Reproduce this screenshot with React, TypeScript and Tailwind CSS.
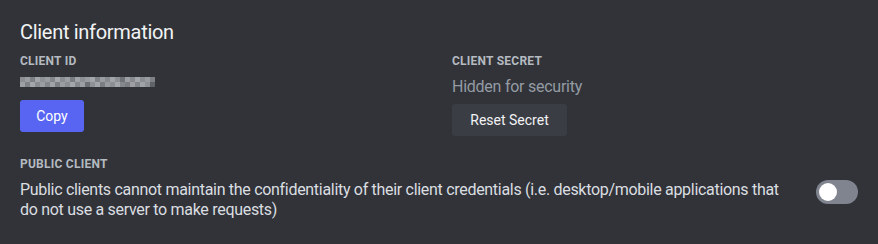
import React from "react";

// pixelated placeholder for the hidden client id
const idShades = [
  ["#8b8e93", "#9a9da2", "#7d8085", "#a2a5aa", "#8f9297", "#9a9da2", "#83868b", "#a5a8ad", "#8a8d92", "#9c9fa4", "#7a7d82", "#a0a3a8", "#8d9095", "#989ba0", "#a3a6ab", "#7f8287", "#9a9da2", "#878a8f", "#a1a4a9", "#8c8f94", "#6f7277", "#9d9fa4", "#878a8f", "#a4a7ac", "#8a8d92", "#989ba0", "#7e8186"],
  ["#9da0a5", "#7f8287", "#a3a6ab", "#888b90", "#9b9ea3", "#83868b", "#a0a3a8", "#7c7f84", "#9a9da2", "#8b8e93", "#a4a7ac", "#85888d", "#9c9fa4", "#6d7075", "#8e9196", "#a2a5aa", "#7b7e83", "#989ba0", "#8c8f94", "#a3a6ab", "#85888d", "#7a7d82", "#9e9fa5", "#83868b", "#a0a3a8", "#8e9196", "#5f6267"],
];

const App: React.FC = () => {
  return (
    <div
      className="w-[878px] h-[244px] bg-[#313338] px-5 pt-5 pb-6"
      style={{ fontFamily: 'Roboto, "Noto Sans", sans-serif' }}
    >
      {/* Title */}
      <h2 className="text-[20px] leading-6 tracking-[-0.3px] text-[#f2f3f5] font-normal">
        Client information
      </h2>

      <div className="grid grid-cols-[432px_1fr] mt-[9px]">
        {/* Client ID */}
        <div className="flex flex-col items-start">
          <div className="text-[12px] leading-4 font-bold uppercase tracking-[0.02em] text-[#b5bac1]">
            Client ID
          </div>
          <div className="mt-2 flex flex-col">
            {idShades.map((row, r) => (
              <div key={r} className="flex">
                {row.map((c, i) => (
                  <div key={i} className="w-[5px] h-[5px]" style={{ backgroundColor: c }} />
                ))}
              </div>
            ))}
          </div>
          <button className="mt-[13px] h-8 w-16 rounded-[3px] bg-[#5865f2] text-[14px] text-white">
            Copy
          </button>
        </div>

        {/* Client Secret */}
        <div className="flex flex-col items-start">
          <div className="text-[12px] leading-4 font-bold uppercase tracking-[0.02em] text-[#b5bac1]">
            Client Secret
          </div>
          <div className="mt-2 text-[16px] leading-5 tracking-[-0.25px] text-[#949ba4]">
            Hidden for security
          </div>
          <button className="mt-[7px] h-8 w-[115px] rounded-[3px] bg-[#3b3d44] text-[14px] text-[#f2f3f5]">
            Reset Secret
          </button>
        </div>
      </div>

      {/* Public client */}
      <div className="mt-5">
        <div className="text-[12px] leading-4 font-bold uppercase tracking-[0.02em] text-[#b5bac1]">
          Public Client
        </div>
        <div className="mt-2 flex items-start justify-between">
          <p className="w-[770px] text-[16px] leading-5 tracking-[-0.3px] text-[#dbdee1]">
            Public clients cannot maintain the confidentiality of their client credentials (i.e.
            desktop/mobile applications that do not use a server to make requests)
          </p>
          <div className="w-[42px] h-6 rounded-full bg-[#80848e] flex items-center px-[3px] shrink-0">
            <div className="w-[18px] h-[18px] rounded-full bg-white" />
          </div>
        </div>
      </div>
    </div>
  );
};

export default App;
